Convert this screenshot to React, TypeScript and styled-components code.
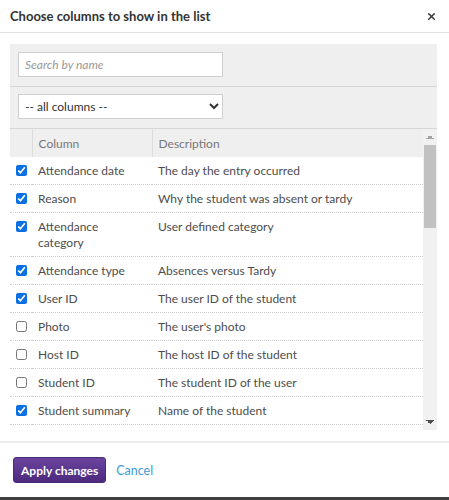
import { useState } from "react";
import styled, { createGlobalStyle } from "styled-components";
import { X } from "lucide-react";

const GlobalStyle = createGlobalStyle`
  html, body {
    margin: 0;
    padding: 0;
    background: #3f3f3f;
  }

  body {
    font-family: Lato, "Open Sans", sans-serif;
    color: #444;
  }
`;

const Dialog = styled.div`
  display: flex;
  flex-direction: column;
  width: 449px;
  height: 497px;
  background: #fff;
`;

const Header = styled.header`
  display: flex;
  align-items: center;
  justify-content: space-between;
  height: 34px;
  padding: 0 12px 0 10px;
  border-bottom: 1px solid #e2e2e2;
  box-sizing: border-box;
`;

const Title = styled.h1`
  margin: 0;
  font-size: 13px;
  font-weight: 700;
  color: #333;
`;

const CloseButton = styled.button`
  display: flex;
  padding: 0;
  border: 0;
  background: none;
  color: #333;
  cursor: pointer;
`;

const Body = styled.div`
  padding: 11px 12px 0 10px;
`;

const Panel = styled.section`
  display: flex;
  flex-direction: column;
  background: #efefef;
`;

const FilterRow = styled.div<{ top: number }>`
  padding: ${({ top }) => top}px 8px 9px;
  border-bottom: 1px solid #d6d6d6;
`;

const SearchInput = styled.input`
  display: block;
  width: 205px;
  height: 25px;
  box-sizing: border-box;
  padding: 0 6px;
  border: 1px solid #cfcfcf;
  background: #fff;
  font-family: inherit;
  font-size: 12px;
  outline: none;

  &::placeholder {
    font-style: italic;
    color: #999;
  }
`;

const Select = styled.select`
  display: block;
  width: 205px;
  height: 25px;
  box-sizing: border-box;
  padding: 0 2px;
  border: 1px solid #cfcfcf;
  border-radius: 0;
  background: #fff;
  font-family: inherit;
  font-size: 12px;
  color: #333;
`;

const ListFrame = styled.div`
  display: flex;
  height: 301px;
`;

const TableViewport = styled.div`
  flex: 1;
  overflow: hidden;
  background: #fff;
`;

const ScrollTrack = styled.div`
  display: flex;
  flex-direction: column;
  width: 14px;
  background: #f1f1f1;
`;

const ScrollArrow = styled.div<{ dir: "up" | "down" }>`
  height: 16px;
  background-repeat: no-repeat;
  background-position: center;
  background-size: 8px 4px;
  background-image: ${({ dir }) =>
    dir === "up"
      ? "conic-gradient(from 135deg at 50% 0, #a3a3a3 0 90deg, transparent 0)"
      : "conic-gradient(from -45deg at 50% 100%, #505050 0 90deg, transparent 0)"};
`;

const ScrollRail = styled.div`
  flex: 1;
  padding: 0 1px;
`;

const ScrollThumb = styled.div`
  height: 83px;
  background: #c1c1c1;
`;

const Table = styled.table`
  width: 100%;
  border-collapse: collapse;
  table-layout: fixed;
  font-size: 12px;
`;

const HeadCell = styled.th<{ width?: number }>`
  width: ${({ width }) => (width ? `${width}px` : "auto")};
  height: 28px;
  padding: 0 6px;
  box-sizing: border-box;
  background: #efefef;
  border-left: 1px solid #dcdcdc;
  text-align: left;
  font-weight: 400;
  color: #777;

  &:first-child {
    border-left: 0;
  }
`;

const Row = styled.tr`
  border-bottom: 1px dotted #cdcdcd;
`;

const CheckCell = styled.td`
  padding: 8px 0 0 6px;
  vertical-align: top;
`;

const Cell = styled.td`
  padding: 6px 6px 5px;
  line-height: 16px;
  vertical-align: top;
  color: #4d4d4d;
`;

const Check = styled.input`
  display: block;
  width: 11px;
  height: 11px;
  margin: 0;
  accent-color: #0b6fe4;
`;

const Footer = styled.footer`
  display: flex;
  align-items: center;
  gap: 10px;
  margin-top: 11px;
  padding: 14px 13px;
  border-top: 2px solid #ececec;
`;

const ApplyButton = styled.button`
  height: 26px;
  padding: 0 7px;
  border: 1px solid #4a2a78;
  border-radius: 3px;
  background: linear-gradient(#6b439f, #4c2a7d);
  color: #fff;
  font-family: inherit;
  font-size: 12px;
  font-weight: 700;
  cursor: pointer;
`;

const CancelLink = styled.a`
  font-size: 12.5px;
  color: #3e9ad8;
  text-decoration: none;
  cursor: pointer;
`;

interface ColumnOption {
  name: string;
  description: string;
  checked: boolean;
}

const COLUMNS: ColumnOption[] = [
  { name: "Attendance date", description: "The day the entry occurred", checked: true },
  { name: "Reason", description: "Why the student was absent or tardy", checked: true },
  { name: "Attendance category", description: "User defined category", checked: true },
  { name: "Attendance type", description: "Absences versus Tardy", checked: true },
  { name: "User ID", description: "The user ID of the student", checked: true },
  { name: "Photo", description: "The user's photo", checked: false },
  { name: "Host ID", description: "The host ID of the student", checked: false },
  { name: "Student ID", description: "The student ID of the user", checked: false },
  { name: "Student summary", description: "Name of the student", checked: true },
];

export default function App() {
  const [columns, setColumns] = useState(COLUMNS);

  const toggle = (name: string) => {
    setColumns((prev) =>
      prev.map((column) => (column.name === name ? { ...column, checked: !column.checked } : column))
    );
  };

  return (
    <>
      <GlobalStyle />
      <Dialog>
        <Header>
          <Title>Choose columns to show in the list</Title>
          <CloseButton aria-label="Close">
            <X size={11} strokeWidth={3.2} />
          </CloseButton>
        </Header>
        <Body>
          <Panel>
            <FilterRow top={8}>
              <SearchInput placeholder="Search by name" />
            </FilterRow>
            <FilterRow top={7}>
              <Select defaultValue="all">
                <option value="all">-- all columns --</option>
                <option value="selected">-- selected columns --</option>
              </Select>
            </FilterRow>
            <ListFrame>
              <TableViewport>
                <Table>
                  <thead>
                    <tr>
                      <HeadCell width={22} />
                      <HeadCell width={120}>Column</HeadCell>
                      <HeadCell>Description</HeadCell>
                    </tr>
                  </thead>
                  <tbody>
                    {columns.map((column) => (
                      <Row key={column.name}>
                        <CheckCell>
                          <Check
                            type="checkbox"
                            checked={column.checked}
                            onChange={() => toggle(column.name)}
                          />
                        </CheckCell>
                        <Cell>{column.name}</Cell>
                        <Cell>{column.description}</Cell>
                      </Row>
                    ))}
                  </tbody>
                </Table>
              </TableViewport>
              <ScrollTrack>
                <ScrollArrow dir="up" />
                <ScrollRail>
                  <ScrollThumb />
                </ScrollRail>
                <ScrollArrow dir="down" />
              </ScrollTrack>
            </ListFrame>
          </Panel>
        </Body>
        <Footer>
          <ApplyButton>Apply changes</ApplyButton>
          <CancelLink>Cancel</CancelLink>
        </Footer>
      </Dialog>
    </>
  );
}
